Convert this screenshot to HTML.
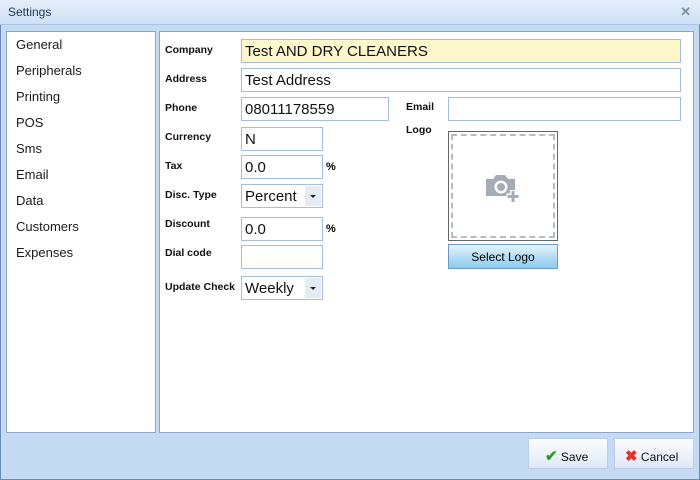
<!DOCTYPE html>
<html><head><style>
*{margin:0;padding:0;box-sizing:border-box}
body{width:700px;height:480px;background:#c5daf3;font-family:"Liberation Sans",sans-serif;position:relative;overflow:hidden;box-shadow:inset 0 0 0 1px #6a8bb8}
.title{position:absolute;left:0;top:0;width:700px;height:25px;background:linear-gradient(#e4eefb,#cfe0f5);border-bottom:1px solid #a9c3e3;font-size:12px;color:#1e395b;padding:5px 0 0 8px}
.x{position:absolute;right:9px;top:4px;color:#7d8ea6;font-size:13px;font-weight:bold}
.panel{position:absolute;background:#fff;border:1px solid #8da6c6}
.nav div{font-size:13px;color:#1b1b1b;height:26px;padding-left:9px}
.lbl{position:absolute;font-size:10.5px;font-weight:bold;color:#111}
.in{position:absolute;border:1px solid #a6bedd;background:#fff;font-size:15px;color:#111;padding:3px 0 0 3px;height:24px}
.dd{position:absolute;right:1px;top:1px;width:16px;height:20px;background:#e3ebf5}
.dd:after{content:"";position:absolute;left:5px;top:9px;border:3px solid transparent;border-top:3px solid #222}
.pct{position:absolute;font-size:11px;font-weight:bold}
.btn{position:absolute;border:1px solid #b9cde6;background:linear-gradient(#fbfdff,#dfe9f5);font-size:12px;color:#111;height:31px;padding-top:8px}
</style></head><body>
<div class="title">Settings</div><div class="x">✕</div>
<div class="panel nav" style="left:6px;top:31px;width:150px;height:402px;padding-top:5px">
<div>General</div><div>Peripherals</div><div>Printing</div><div>POS</div><div>Sms</div><div>Email</div><div>Data</div><div>Customers</div><div>Expenses</div></div>
<div class="panel" style="left:159px;top:31px;width:535px;height:402px"></div>
<div class="lbl" style="left:165px;top:44px">Company</div>
<div class="in" style="left:241px;top:39px;width:440px;background:#fdf7cc">Test AND DRY CLEANERS</div>
<div class="lbl" style="left:165px;top:73px">Address</div>
<div class="in" style="left:241px;top:68px;width:440px">Test Address</div>
<div class="lbl" style="left:165px;top:102px">Phone</div>
<div class="in" style="left:241px;top:97px;width:148px">08011178559</div>
<div class="lbl" style="left:406px;top:101px">Email</div>
<div class="in" style="left:448px;top:97px;width:233px"></div>
<div class="lbl" style="left:406px;top:124px">Logo</div>
<div class="lbl" style="left:165px;top:131px">Currency</div>
<div class="in" style="left:241px;top:127px;width:82px">N</div>
<div class="lbl" style="left:165px;top:160px">Tax</div>
<div class="in" style="left:241px;top:155px;width:82px">0.0</div><div class="pct" style="left:326px;top:161px">%</div>
<div class="lbl" style="left:165px;top:189px">Disc. Type</div>
<div class="in" style="left:241px;top:184px;width:82px">Percent<div class="dd"></div></div>
<div class="lbl" style="left:165px;top:218px">Discount</div>
<div class="in" style="left:241px;top:217px;width:82px">0.0</div><div class="pct" style="left:326px;top:223px">%</div>
<div class="lbl" style="left:165px;top:247px">Dial code</div>
<div class="in" style="left:241px;top:245px;width:82px"></div>
<div class="lbl" style="left:165px;top:281px">Update Check</div>
<div class="in" style="left:241px;top:276px;width:82px">Weekly<div class="dd"></div></div>
<div style="position:absolute;left:448px;top:131px;width:110px;height:110px;border:1px solid #666;padding:2px"><div style="width:104px;height:104px;border:2px dashed #b5bcc4"></div></div>
<svg style="position:absolute;left:485px;top:170px" width="36" height="36" viewBox="0 0 36 36"><path d="M1 9h7l3-4h9l3 4h7v17H1z" fill="#a4adb6"/><circle cx="16" cy="17" r="6.5" fill="#fff"/><circle cx="16" cy="17" r="4" fill="#a4adb6"/><path d="M28 20v13M21.5 26.5h13" stroke="#fff" stroke-width="6"/><path d="M28 21v11M22.5 26.5h11" stroke="#a4adb6" stroke-width="3"/></svg>
<div style="position:absolute;left:448px;top:244px;width:110px;height:25px;border:1px solid #6d9ac4;background:linear-gradient(#e6f4fc,#b5def6 50%,#8ccdef);font-size:12px;text-align:center;padding-top:5px">Select Logo</div>
<div class="btn" style="left:528px;top:438px;width:80px;padding-left:16px"><span style="color:#2a9b2a;font-weight:bold;font-size:15px">✔</span> Save</div>
<div class="btn" style="left:614px;top:438px;width:80px;padding-left:10px"><span style="color:#d33;font-weight:bold;font-size:15px">✖</span> Cancel</div>
</body></html>
